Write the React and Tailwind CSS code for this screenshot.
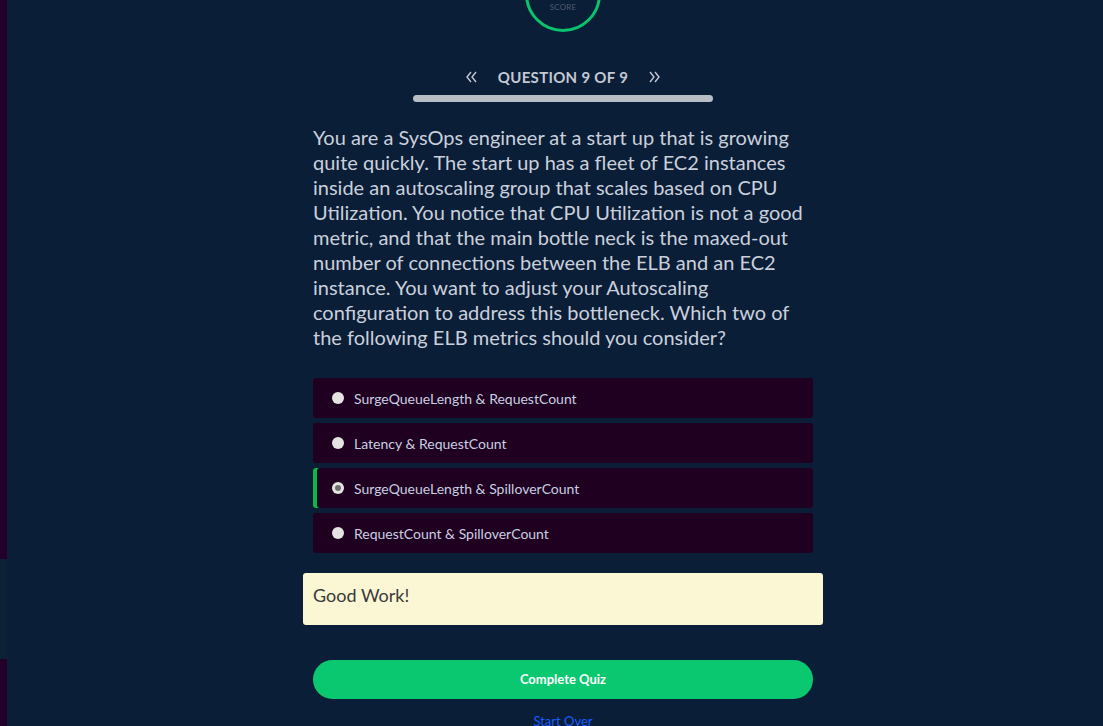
export default function App() {
  const options = [
    { text: "SurgeQueueLength & RequestCount", selected: false },
    { text: "Latency & RequestCount", selected: false },
    { text: "SurgeQueueLength & SpilloverCount", selected: true },
    { text: "RequestCount & SpilloverCount", selected: false },
  ];
  const Chev = ({ flip }) => (
    <svg width="11" height="12" viewBox="0 0 11 12" className={flip ? "rotate-180" : ""} fill="none" stroke="#c3c9d3" strokeWidth="1.4">
      <path d="M5 1 L1 6 L5 11" />
      <path d="M10 1 L6 6 L10 11" />
    </svg>
  );
  return (
    <div className="flex h-[726px] w-[1103px] overflow-hidden bg-[#0b1e37]" style={{ fontFamily: "Lato, 'Open Sans', sans-serif" }}>
      <div className="flex w-[7px] shrink-0 flex-col">
        <div className="h-[559px] shrink-0 bg-[#22002a]"></div>
        <div className="h-[100px] shrink-0 bg-[#0b2236]"></div>
        <div className="flex-1 bg-[#22002a]"></div>
      </div>
      <div className="flex flex-1 justify-center pl-[16px]">
        <div className="flex w-[500px] flex-col items-center">
          <div className="-mt-[44px] flex h-[76px] w-[76px] shrink-0 items-end justify-center rounded-full border-[3px] border-[#0ac26e]">
            <span className="mb-[17px] text-[8px] leading-[10px] tracking-wide text-[#4f5a70]">SCORE</span>
          </div>
          <div className="mt-[35px] flex h-[20px] shrink-0 items-center text-[#c3c9d3]">
            <Chev />
            <span className="mx-[21px] text-[15px] font-bold tracking-[0.02em]">QUESTION 9 OF 9</span>
            <Chev flip />
          </div>
          <div className="mt-[8px] h-[7px] w-[300px] shrink-0 rounded-full bg-[#b8bec6]"></div>
          <p className="mt-[23px] w-full shrink-0 text-[20px] leading-[25px] text-[#c9d0dc]">
            You are a SysOps engineer at a start up that is growing quite quickly. The start up has a fleet of EC2 instances inside an autoscaling group that scales based on CPU Utilization. You notice that CPU Utilization is not a good metric, and that the main bottle neck is the maxed-out number of connections between the ELB and an EC2 instance. You want to adjust your Autoscaling configuration to address this bottleneck. Which two of the following ELB metrics should you consider?
          </p>
          <div className="mt-[28px] flex w-full shrink-0 flex-col gap-[5px]">
            {options.map((o) => (
              <div key={o.text} className={"flex h-[40px] shrink-0 items-center rounded-[3px] bg-[#1f0020] pl-[19px] " + (o.selected ? "shadow-[inset_4px_0_0_#0ab84a]" : "")}>
                <span className="flex h-[12px] w-[12px] items-center justify-center rounded-full bg-[#e6e4e2]">
                  {o.selected && <span className="h-[6px] w-[6px] rounded-full bg-[#6e6e6e]"></span>}
                </span>
                <span className="ml-[10px] text-[14px] text-[#c9cfe0]">{o.text}</span>
              </div>
            ))}
          </div>
          <div className="mt-[20px] h-[52px] w-[520px] shrink-0 rounded-[3px] bg-[#fbf6d3] px-[10px] pt-[10px] text-[18px] leading-[24px] text-[#3a3a3a]">
            Good Work!
          </div>
          <button className="mt-[35px] h-[39px] w-full shrink-0 rounded-full bg-[#0ac870] text-[13px] font-bold text-white">
            Complete Quiz
          </button>
          <div className="mt-[13px] shrink-0 text-[13px] text-[#1a5cff]">Start Over</div>
        </div>
      </div>
    </div>
  );
}
